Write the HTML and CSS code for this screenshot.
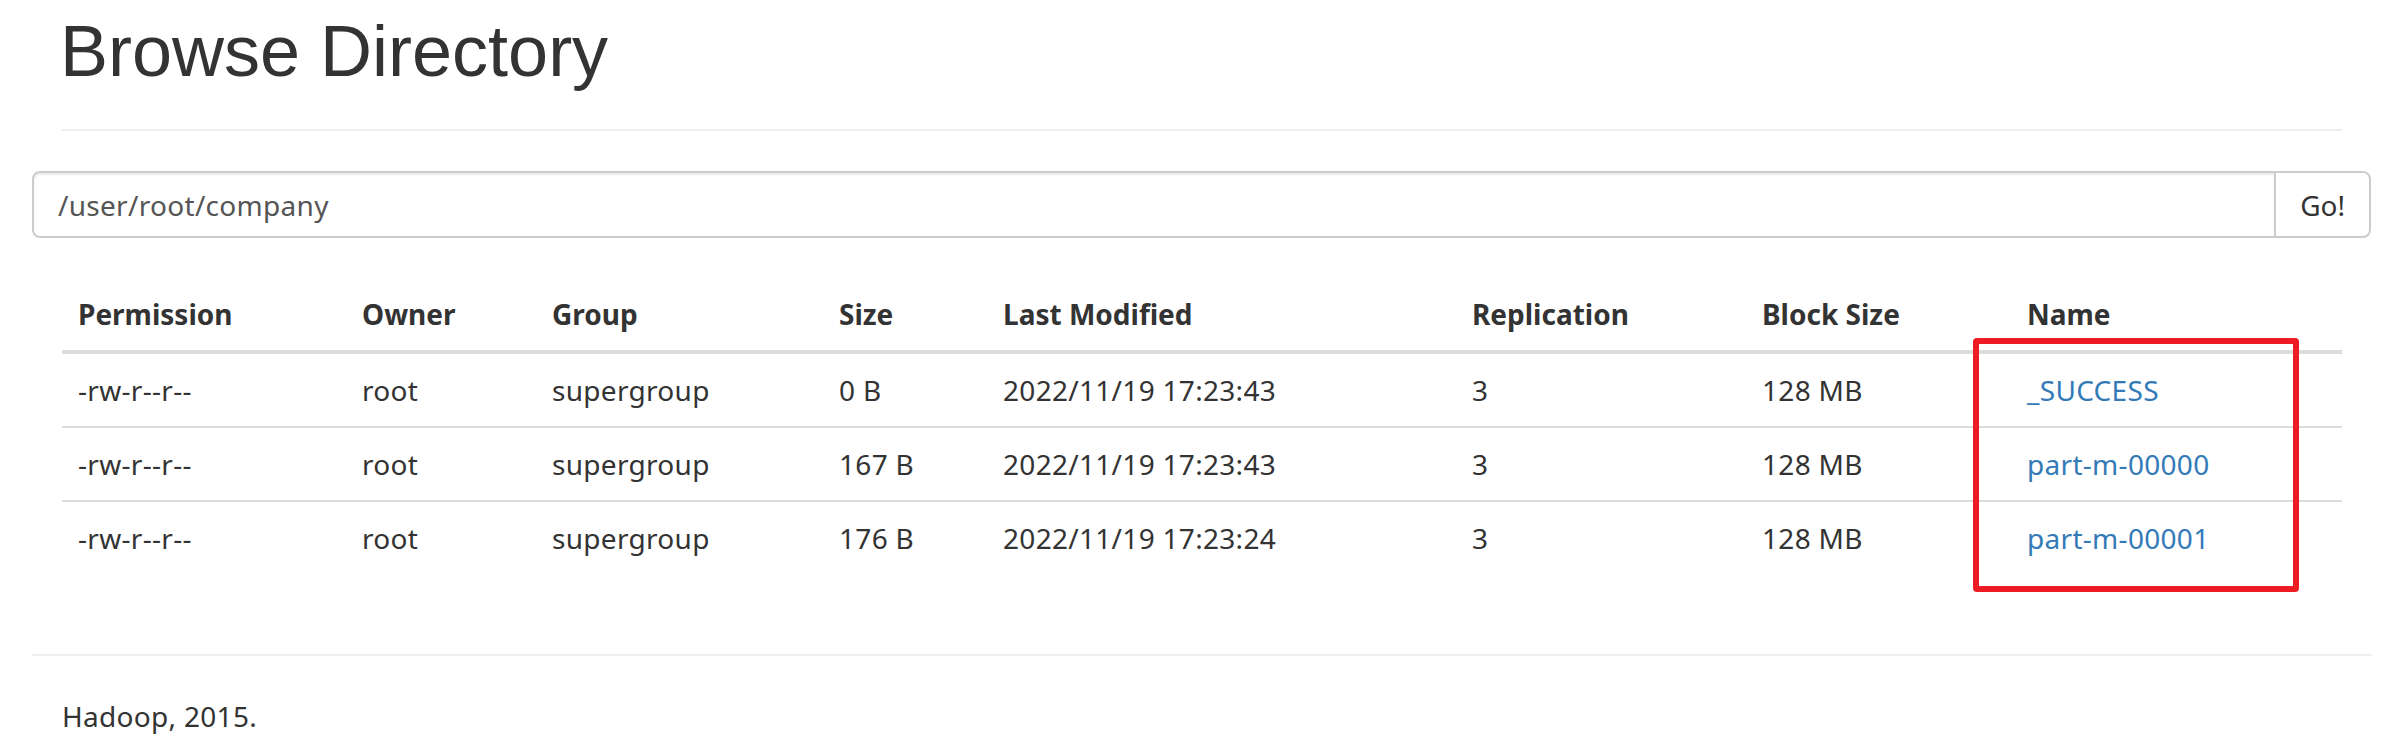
FILE: index.html
```html
<!DOCTYPE html>
<html lang="en">
<head>
<meta charset="utf-8">
<title>Browse Directory</title>
<link rel="stylesheet" href="styles.css">
</head>
<body>
<div class="container">
  <div class="page-header">
    <h1>Browse Directory</h1>
  </div>
  <form class="search" onsubmit="return false;">
    <input class="search-input" type="text" value="/user/root/company">
    <button class="search-btn" type="button">Go!</button>
  </form>
  <div class="listing">
    <table class="table">
      <colgroup>
        <col class="c-perm"><col class="c-owner"><col class="c-group"><col class="c-size">
        <col class="c-mod"><col class="c-repl"><col class="c-block"><col class="c-name">
      </colgroup>
      <thead>
        <tr>
          <th>Permission</th><th>Owner</th><th>Group</th><th>Size</th>
          <th>Last Modified</th><th>Replication</th><th>Block Size</th><th>Name</th>
        </tr>
      </thead>
      <tbody>
        <tr>
          <td>-rw-r--r--</td><td>root</td><td>supergroup</td><td>0 B</td>
          <td>2022/11/19 17:23:43</td><td>3</td><td>128 MB</td><td><a href="#">_SUCCESS</a></td>
        </tr>
        <tr>
          <td>-rw-r--r--</td><td>root</td><td>supergroup</td><td>167 B</td>
          <td>2022/11/19 17:23:43</td><td>3</td><td>128 MB</td><td><a href="#">part-m-00000</a></td>
        </tr>
        <tr>
          <td>-rw-r--r--</td><td>root</td><td>supergroup</td><td>176 B</td>
          <td>2022/11/19 17:23:24</td><td>3</td><td>128 MB</td><td><a href="#">part-m-00001</a></td>
        </tr>
      </tbody>
    </table>
    <div class="highlight"></div>
  </div>
  <hr class="footer-rule">
  <p class="footer-text">Hadoop, 2015.</p>
</div>
</body>
</html>
```

FILE: styles.css
```css
html, body {
  margin: 0;
  padding: 0;
  background: #fff;
}

body {
  font-family: "Noto Sans", "Open Sans", sans-serif;
  font-size: 28px;
  line-height: 40px;
  color: #333;
}

.container {
  display: flex;
  flex-direction: column;
  padding: 0 12px 0 32px;
}

.page-header {
  margin: 0 30px 40px;
  padding-bottom: 18px;
  border-bottom: 2px solid #eee;
}

.page-header h1 {
  margin: 12px 0 20px;
  font-family: "Liberation Sans", Arial, sans-serif;
  font-size: 72px;
  font-weight: 400;
  line-height: 1.1;
  color: #333;
  text-indent: -2px;
}

.search {
  display: flex;
  height: 67px;
  margin: 0 1px 40px 0;
}

.search-input {
  flex: 1;
  min-width: 0;
  margin: 0;
  padding: 0 24px;
  border: 2px solid #ccc;
  border-radius: 8px 0 0 8px;
  box-shadow: inset 0 2px 2px rgba(0, 0, 0, 0.075);
  font-family: "Noto Sans", "Open Sans", sans-serif;
  font-size: 28px;
  letter-spacing: 0.3px;
  color: #555;
  background: #fff;
  outline: none;
}

.search-btn {
  margin: 0 0 0 -2px;
  padding: 0 24px;
  border: 2px solid #ccc;
  border-radius: 0 8px 8px 0;
  background: #fff;
  font-family: "Noto Sans", "Open Sans", sans-serif;
  font-size: 28px;
  color: #333;
}

.listing {
  position: relative;
  margin: 0 30px 40px;
}

.table {
  width: 100%;
  table-layout: fixed;
  border-collapse: collapse;
  border-spacing: 0;
  letter-spacing: 0.3px;
}

.c-perm { width: 284px; }
.c-owner { width: 190px; }
.c-group { width: 287px; }
.c-size { width: 164px; }
.c-mod { width: 469px; }
.c-repl { width: 290px; }
.c-block { width: 265px; }
.c-name { width: 331px; }

.table th,
.table td {
  padding: 16px;
  line-height: 40px;
  text-align: left;
  vertical-align: top;
  white-space: nowrap;
}

.table th {
  font-weight: 700;
  letter-spacing: 0;
  border-bottom: 4px solid #ddd;
}

.table td {
  border-top: 2px solid #ddd;
}

.table a {
  color: #337ab7;
  text-decoration: none;
}

.highlight {
  position: absolute;
  left: 1911px;
  top: 60px;
  width: 314px;
  height: 242px;
  border: 6px solid #ed1c24;
  border-radius: 4px;
}

.footer-rule {
  margin: 40px 0;
  height: 0;
  border: 0;
  border-top: 2px solid #eee;
}

.footer-text {
  margin: 0 30px;
  letter-spacing: 0.3px;
}
```
